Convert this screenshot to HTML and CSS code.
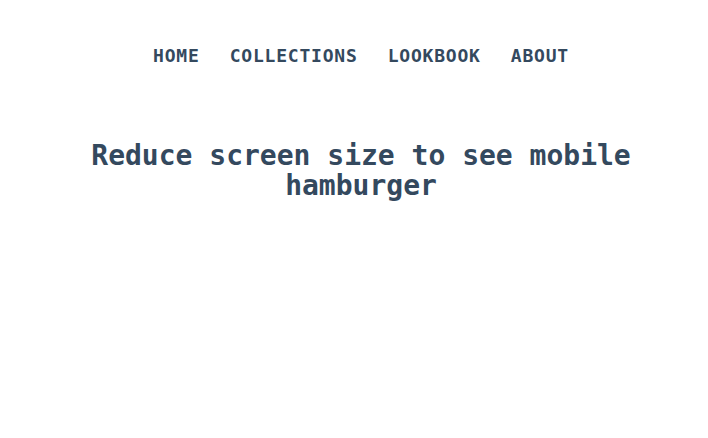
FILE: index.html
```html
<!DOCTYPE html>
<html lang="en">
<head>
<meta charset="utf-8">
<title>Nav</title>
<link rel="stylesheet" href="styles.css">
</head>
<body>
<header class="site-header">
  <nav class="nav">
    <ul class="nav-list">
      <li class="nav-item"><a class="nav-link" href="#">HOME</a></li>
      <li class="nav-item"><a class="nav-link" href="#">COLLECTIONS</a></li>
      <li class="nav-item"><a class="nav-link" href="#">LOOKBOOK</a></li>
      <li class="nav-item"><a class="nav-link" href="#">ABOUT</a></li>
    </ul>
  </nav>
</header>
<main class="main">
  <h1 class="title">Reduce screen size to see mobile hamburger</h1>
</main>
</body>
</html>
```

FILE: styles.css
```css
html, body {
  margin: 0;
  padding: 0;
  background: #ffffff;
}
body {
  padding-left: 14px;
  font-family: "DejaVu Sans Mono", "Liberation Mono", monospace;
  color: #34495e;
}
.site-header {
  padding-top: 45px;
}
.nav-list {
  list-style: none;
  margin: 0;
  padding: 0;
  display: flex;
  justify-content: center;
  gap: 30px;
}
.nav-link {
  display: block;
  font-size: 18px;
  line-height: 22px;
  font-weight: bold;
  letter-spacing: 0.8px;
  color: #34495e;
  text-decoration: none;
}
.main {
  padding-top: 74px;
}
.title {
  margin: 0;
  padding: 0 60px;
  text-align: center;
  font-size: 28px;
  line-height: 30px;
  font-weight: bold;
  color: #34495e;
}
```
